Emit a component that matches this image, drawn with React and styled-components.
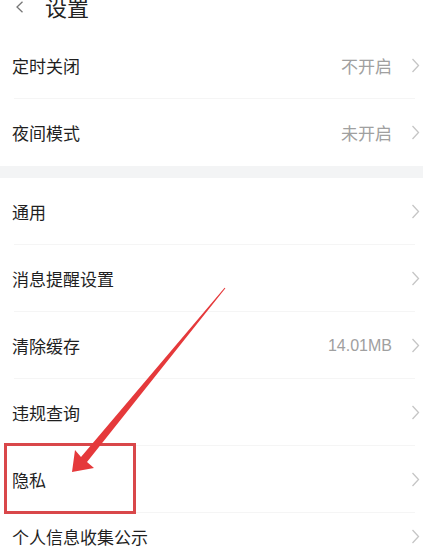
import React from "react";
import styled, { createGlobalStyle } from "styled-components";

const GlobalStyle = createGlobalStyle`
  body {
    margin: 0;
    background: #ffffff;
    font-family: "Noto Sans CJK SC", "Noto Sans", sans-serif;
    overflow: hidden;
  }
`;

const Page = styled.div`
  position: relative;
  width: 423px;
  height: 547px;
  overflow: hidden;
  background: #ffffff;
`;

const Header = styled.div`
  height: 32px;
  display: flex;
  align-items: flex-start;
  padding-left: 15px;
  gap: 21px;
`;

const Back = styled.svg`
  margin-top: 1px;
  flex: none;
`;

const Title = styled.div`
  font-size: 22px;
  line-height: 22px;
  margin-top: -5px;
  color: #222;
`;

const Group = styled.div`
  display: flex;
  flex-direction: column;
`;

const Band = styled.div`
  height: 12px;
  background: #f3f4f5;
`;

const Row = styled.div`
  height: 67px;
  box-sizing: border-box;
  display: flex;
  align-items: center;
  padding: 0 3px ${(p) => (p.$raise ? `${p.$raise}px` : "0")} 12px;
  position: relative;
  &::after {
    content: "";
    display: ${(p) => (p.$last ? "none" : "block")};
    position: absolute;
    left: 14px;
    right: 8px;
    bottom: 0;
    height: 1px;
    background: #f5f5f5;
  }
`;

const Label = styled.span`
  flex: 1;
  font-size: 17px;
  color: #1f1f1f;
`;

const Value = styled.span`
  font-size: ${(p) => (p.$latin ? "16px" : "17px")};
  color: #a0a0a0;
  margin-right: 19px;
  font-family: ${(p) => (p.$latin ? '"Liberation Sans", "Noto Sans CJK SC", sans-serif' : "inherit")};
`;

const Chevron = () => (
  <svg width="9" height="15" viewBox="0 0 9 15">
    <path d="M1.5 1 L7.5 7.5 L1.5 14" fill="none" stroke="#c6c6c6" strokeWidth="1.3" />
  </svg>
);

const Highlight = styled.div`
  position: absolute;
  left: 4px;
  top: 443px;
  width: 132px;
  height: 71px;
  box-sizing: border-box;
  border: 3px solid #d9474a;
  pointer-events: none;
`;

const Overlay = styled.svg`
  position: absolute;
  left: 0;
  top: 0;
  pointer-events: none;
`;

const Item = ({ label, value, latin, last, raise }) => (
  <Row $last={last} $raise={raise}>
    <Label>{label}</Label>
    {value && <Value $latin={latin}>{value}</Value>}
    <Chevron />
  </Row>
);

export default function App() {
  return (
    <Page>
      <GlobalStyle />
      <Header>
        <Back width="9" height="12" viewBox="0 0 9 12">
          <path d="M7.5 0.8 L2 6 L7.5 11.2" fill="none" stroke="#777" strokeWidth="1.3" />
        </Back>
        <Title>设置</Title>
      </Header>
      <Group>
        <Item label="定时关闭" value="不开启" />
        <Item label="夜间模式" value="未开启" last />
      </Group>
      <Band />
      <Group>
        <Item label="通用" />
        <Item label="消息提醒设置" />
        <Item label="清除缓存" value="14.01MB" latin />
        <Item label="违规查询" />
        <Item label="隐私" />
        <Item label="个人信息收集公示" last raise={20} />
      </Group>
      <Highlight />
      <Overlay width="423" height="547" viewBox="0 0 423 547">
        <polygon
          points="72,472 75,450 81,457 224.6,287.7 225.4,288.3 87,462 94,468"
          fill="#e5393b"
        />
      </Overlay>
    </Page>
  );
}
